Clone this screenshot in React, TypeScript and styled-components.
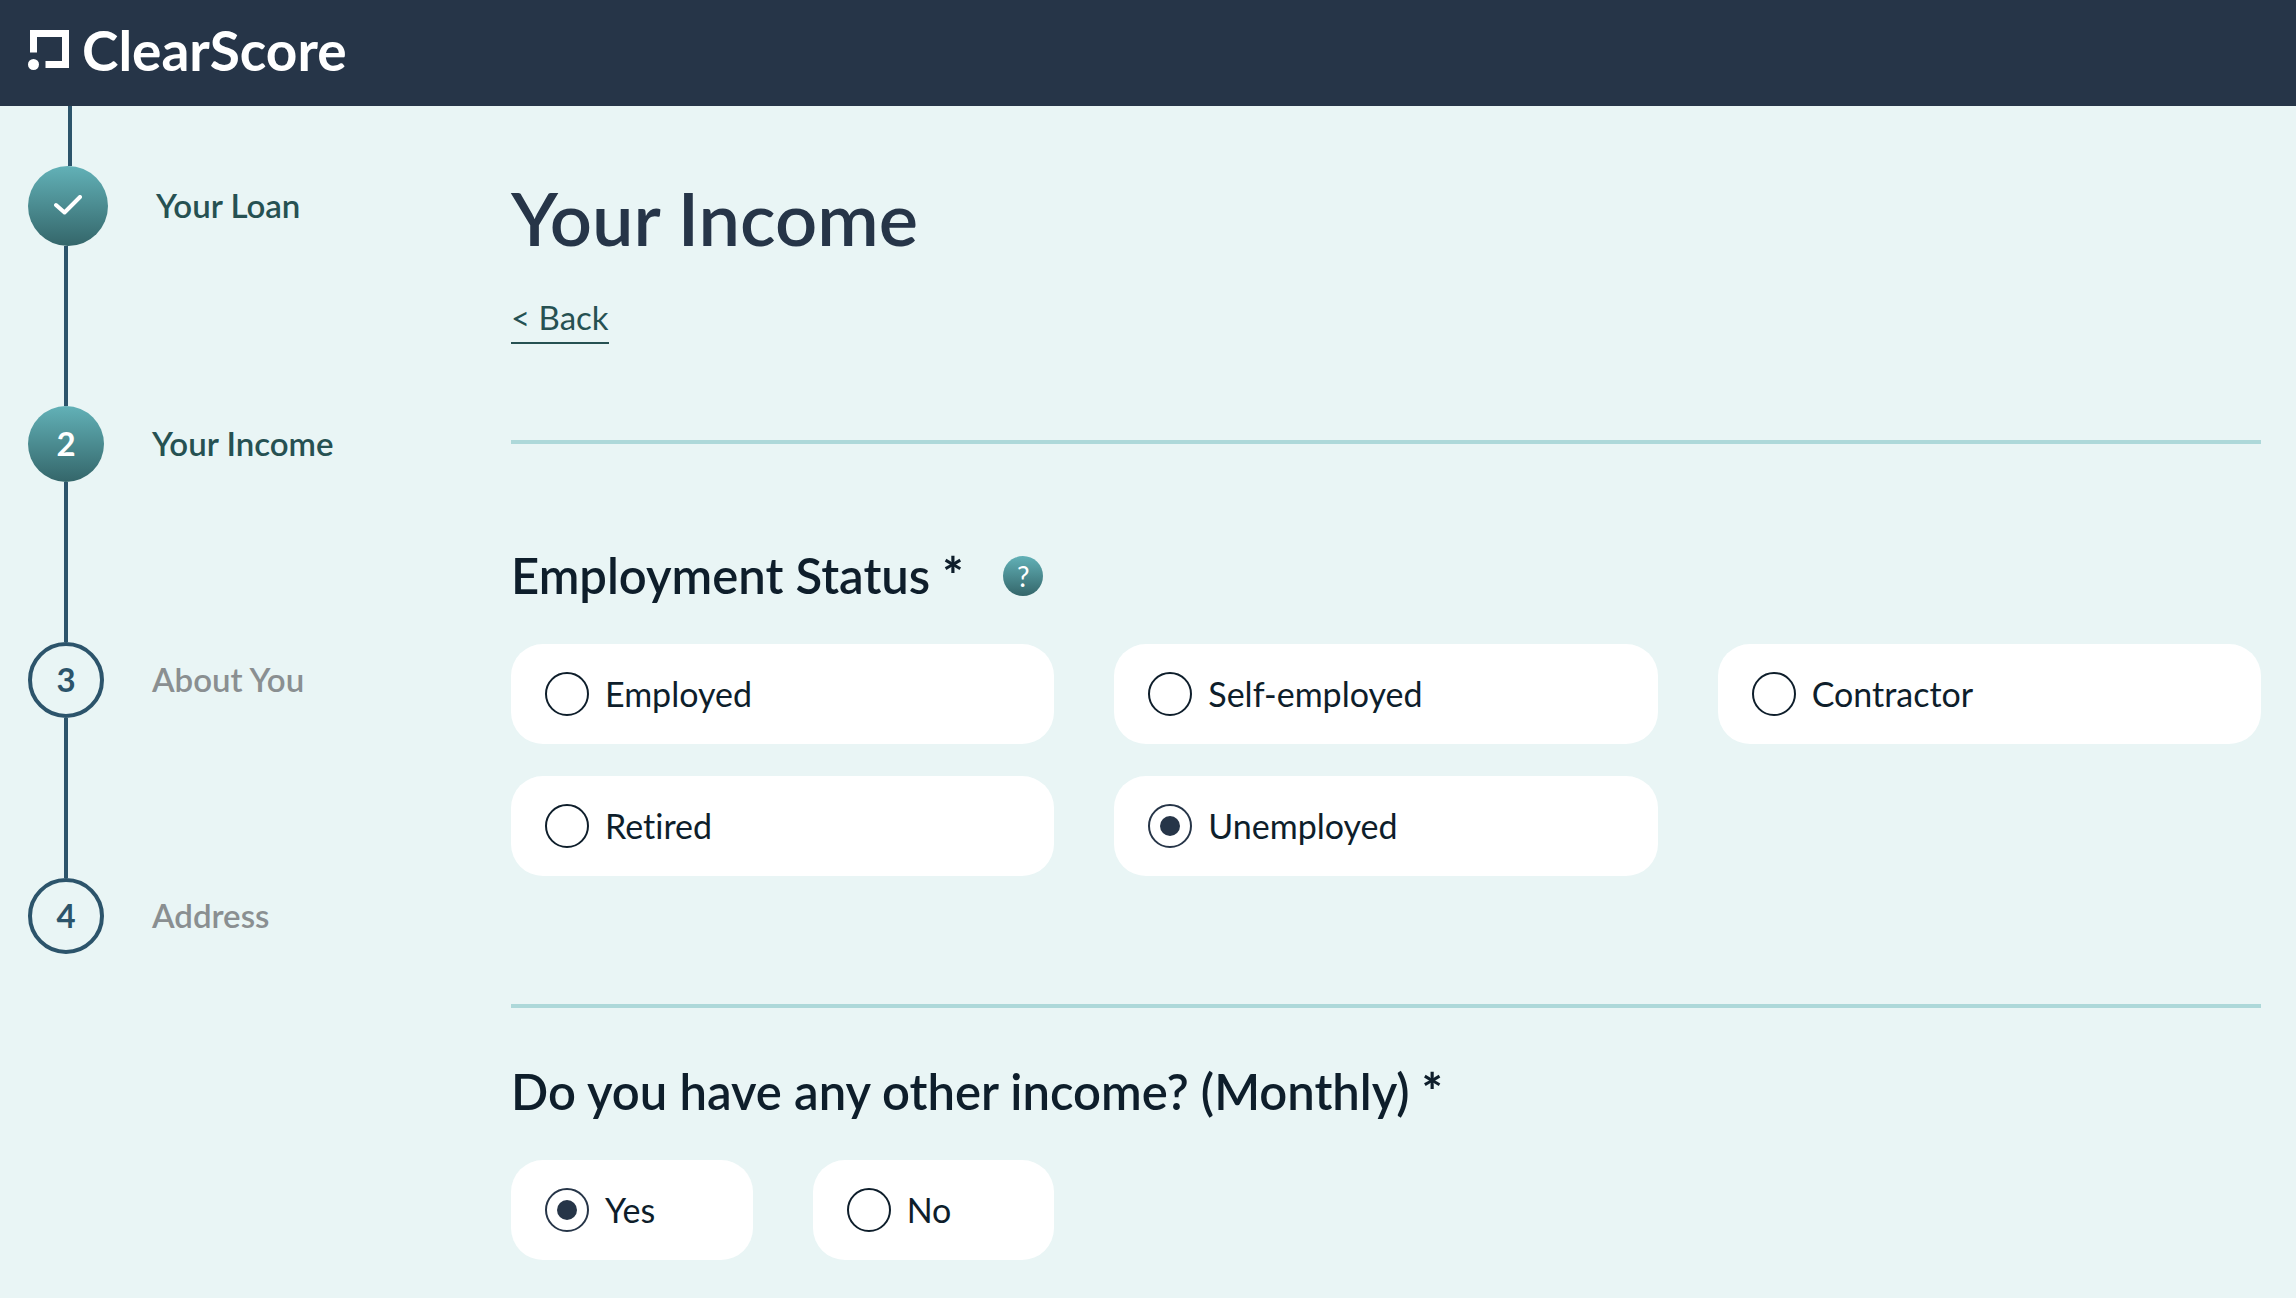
import { Fragment, useState } from "react";
import styled, { createGlobalStyle } from "styled-components";

const GlobalStyle = createGlobalStyle`
  *, *::before, *::after { box-sizing: border-box; }
  body {
    margin: 0;
    background: #e9f5f5;
    color: #0e1e2b;
    font-family: Lato, "Open Sans", sans-serif;
    font-size: 33px;
    font-variant-ligatures: none;
    line-height: 38px;
  }
`;

const Header = styled.header`
  display: flex;
  align-items: center;
  height: 106px;
  padding: 0 28px 6px;
  background: #263548;
`;

const Brand = styled.a`
  display: flex;
  align-items: center;
  gap: 12px;
  color: #fff;
  font-size: 55px;
  font-weight: 700;
  line-height: 64px;
  text-decoration: none;
`;

const Layout = styled.div`
  display: grid;
  grid-template-columns: 448px minmax(0, 1fr);
  column-gap: 35px;
  padding: 0 35px 38px 28px;
`;

const Steps = styled.ol`
  list-style: none;
  margin: 0;
  padding: 0;
`;

const Step = styled.li`
  display: flex;
  align-items: center;
  gap: 48px;
`;

const Line = styled.li<{ $height: number; $centre: number }>`
  width: 4px;
  height: ${(p) => p.$height}px;
  margin-left: ${(p) => p.$centre - 2}px;
  background: #2c546b;
`;

const Marker = styled.span<{ $state: "done" | "current" | "todo" }>`
  display: flex;
  flex: none;
  align-items: center;
  justify-content: center;
  width: ${(p) => (p.$state === "done" ? 80 : 76)}px;
  height: ${(p) => (p.$state === "done" ? 80 : 76)}px;
  padding-bottom: 2px;
  border-radius: 50%;
  border: ${(p) => (p.$state === "todo" ? "4px solid #2c546b" : "none")};
  background: ${(p) =>
    p.$state === "todo" ? "transparent" : "linear-gradient(#62b1b7, #34666a)"};
  color: ${(p) => (p.$state === "todo" ? "#2c546b" : "#fff")};
  font-weight: 700;
`;

const StepLabel = styled.span<{ $muted: boolean }>`
  padding-bottom: 2px;
  color: ${(p) => (p.$muted ? "#8a8f91" : "#265152")};
  font-weight: 600;
`;

const Main = styled.main`
  padding-top: 68px;
`;

const Title = styled.h1`
  margin: 0 0 36px;
  color: #263548;
  font-size: 74px;
  font-weight: 600;
  line-height: 88px;
`;

const BackLink = styled.a`
  height: 46px;
  border-bottom: 2px solid #265152;
  color: #265152;
  text-decoration: none;
`;

const Rule = styled.hr`
  height: 4px;
  margin: 0;
  border: 0;
  background: #add8d9;
`;

const Intro = styled.div`
  display: flex;
  flex-direction: column;
  align-items: flex-start;
  padding-bottom: 96px;
`;

const Question = styled.fieldset<{ $top: number; $bottom: number }>`
  min-width: 0;
  margin: 0;
  border: 0;
  padding: ${(p) => p.$top}px 0 ${(p) => p.$bottom}px;
`;

const Legend = styled.legend`
  display: contents;
`;

const QuestionHead = styled.span`
  display: flex;
  align-items: center;
  gap: 40px;
  height: 56px;
  margin-bottom: 40px;
`;

const QuestionText = styled.span`
  padding-bottom: 2px;
  font-size: 49px;
  font-weight: 600;
  line-height: 56px;
`;

const Required = styled.span`
  font-weight: 900;
`;

const HelpButton = styled.button`
  display: flex;
  align-items: center;
  justify-content: center;
  width: 40px;
  height: 40px;
  padding: 0;
  border: 0;
  border-radius: 50%;
  background: linear-gradient(#62b1b7, #34666a);
  color: #fff;
  font-family: inherit;
  font-size: 28px;
  font-weight: 400;
  line-height: 40px;
`;

const Options = styled.div`
  display: grid;
  grid-template-columns: repeat(6, minmax(0, 1fr));
  gap: 32px 60px;
`;

const Option = styled.label<{ $span: number }>`
  display: flex;
  align-items: center;
  gap: 16px;
  grid-column: span ${(p) => p.$span};
  height: 100px;
  padding: 0 34px;
  border-radius: 32px;
  background: #fff;
  font-size: 34px;
`;

const Radio = styled.input`
  appearance: none;
  display: grid;
  place-items: center;
  flex: none;
  width: 44px;
  height: 44px;
  margin: 0;
  border: 2px solid #0e1e2b;
  border-radius: 50%;

  &:checked {
    border-color: #263548;
  }

  &:checked::before {
    content: "";
    width: 20px;
    height: 20px;
    border-radius: 50%;
    background: #263548;
  }
`;

const steps = [
  { label: "Your Loan", state: "done" },
  { label: "Your Income", state: "current" },
  { label: "About You", state: "todo" },
  { label: "Address", state: "todo" },
] as const;

const LogoMark = () => (
  <svg width="42" height="40" viewBox="0 0 42 40" fill="#fff" aria-hidden="true">
    <path d="M2 0H41V38H17.500V31H34V7H9V22.500H2Z" />
    <circle cx="5.500" cy="34.500" r="5.500" />
  </svg>
);

const Check = () => (
  <svg width="28" height="20" viewBox="0 0 28 20" fill="none" aria-label="Completed">
    <path d="M2 10L10.500 17.500L26 2" stroke="#fff" strokeWidth="4" strokeLinecap="round" strokeLinejoin="round" />
  </svg>
);

type RadioGroupProps = {
  name: string;
  options: string[];
  initial: string;
  span: number;
};

function RadioGroup({ name, options, initial, span }: RadioGroupProps) {
  const [value, setValue] = useState(initial);
  return (
    <Options>
      {options.map((option) => (
        <Option key={option} $span={span} htmlFor={`${name}-${option}`}>
          <Radio
            type="radio"
            id={`${name}-${option}`}
            name={name}
            checked={value === option}
            onChange={() => setValue(option)}
          />
          {option}
        </Option>
      ))}
    </Options>
  );
}

export default function App() {
  return (
    <>
      <GlobalStyle />
      <Header>
        <Brand href="#">
          <LogoMark />
          ClearScore
        </Brand>
      </Header>
      <Layout>
        <Steps>
          {steps.map((step, i) => (
            <Fragment key={step.label}>
              <Line aria-hidden="true" $height={i === 0 ? 60 : 160} $centre={i === 0 ? 42 : 38} />
              <Step>
                <Marker $state={step.state}>{step.state === "done" ? <Check /> : i + 1}</Marker>
                <StepLabel $muted={step.state === "todo"}>{step.label}</StepLabel>
              </Step>
            </Fragment>
          ))}
        </Steps>
        <Main>
          <Intro>
            <Title>Your Income</Title>
            <BackLink href="#">&lt; Back</BackLink>
          </Intro>
          <Rule />
          <Question $top={104} $bottom={128}>
            <Legend>
              <QuestionHead>
                <QuestionText>
                  Employment Status <Required>*</Required>
                </QuestionText>
                <HelpButton type="button">?</HelpButton>
              </QuestionHead>
            </Legend>
            <RadioGroup
              name="employment"
              options={["Employed", "Self-employed", "Contractor", "Retired", "Unemployed"]}
              initial="Unemployed"
              span={2}
            />
          </Question>
          <Rule />
          <Question $top={56} $bottom={0}>
            <Legend>
              <QuestionHead>
                <QuestionText>
                  Do you have any other income? (Monthly) <Required>*</Required>
                </QuestionText>
              </QuestionHead>
            </Legend>
            <RadioGroup name="other-income" options={["Yes", "No"]} initial="Yes" span={1} />
          </Question>
        </Main>
      </Layout>
    </>
  );
}
